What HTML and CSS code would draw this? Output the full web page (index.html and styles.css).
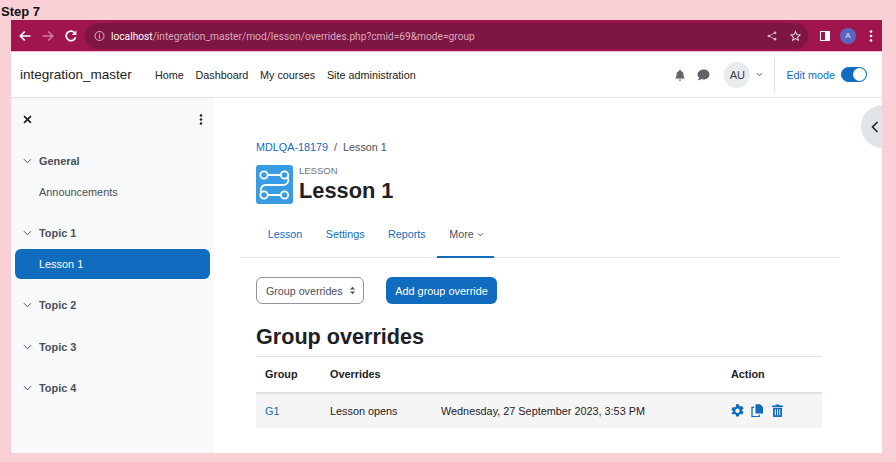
FILE: index.html
```html
<!DOCTYPE html>
<html lang="en">
<head>
<meta charset="utf-8">
<title>Group overrides</title>
<link rel="stylesheet" href="styles.css">
</head>
<body>
<div class="step">Step 7</div>
<div class="window">
  <div class="chrome">
    <div class="chrome-nav">
      <svg class="cicon" viewBox="0 0 14 14"><path d="M12.500 7H2.500M6.800 2.500 2.300 7l4.500 4.500" fill="none" stroke="#fff" stroke-width="1.700"/></svg>
      <svg class="cicon" viewBox="0 0 14 14"><path d="M1.500 7h10M7.200 2.500 11.700 7l-4.500 4.500" fill="none" stroke="#cf7d9c" stroke-width="1.700"/></svg>
      <svg class="cicon" viewBox="0 0 14 14"><path d="M11.600 8.200A4.800 4.800 0 1 1 10.400 3.500" fill="none" stroke="#fff" stroke-width="1.700"/><path d="M12.400 1.400v4.600H7.800z" fill="#fff"/></svg>
    </div>
    <div class="omnibox">
      <svg class="info" viewBox="0 0 12 12"><circle cx="6" cy="6" r="4.900" fill="none" stroke="#e4c6d2" stroke-width="1"/><path d="M6 5.200v3.400M6 3.200v1.100" stroke="#e4c6d2" stroke-width="1.100"/></svg>
      <span class="url"><b>localhost</b>/integration_master/mod/lesson/overrides.php?cmid=69&amp;mode=group</span>
      <svg class="oicon" viewBox="0 0 12 12"><circle cx="9.600" cy="2.200" r="1.600" fill="#d8b5c4"/><circle cx="9.600" cy="9.800" r="1.600" fill="#d8b5c4"/><circle cx="2.200" cy="6" r="1.600" fill="#d8b5c4"/><path d="M9.600 2.200 2.200 6l7.400 3.800" fill="none" stroke="#d8b5c4"/></svg>
      <svg class="oicon star" viewBox="0 0 12 12"><path d="M6 1.200 7.400 4.500l3.600.3-2.700 2.400.8 3.500L6 8.800l-3.100 1.900.8-3.500L1 4.800l3.600-.3z" fill="none" stroke="#ecd5df" stroke-width="1.100"/></svg>
    </div>
    <div class="chrome-end">
      <span class="panel"></span>
      <span class="profile">A</span>
      <svg class="dots" viewBox="0 0 4 14"><circle cx="2" cy="2.500" r="1.300" fill="#fff"/><circle cx="2" cy="7" r="1.300" fill="#fff"/><circle cx="2" cy="11.500" r="1.300" fill="#fff"/></svg>
    </div>
  </div>
  <header class="navbar">
    <span class="brand">integration_master</span>
    <nav class="primary">
      <a>Home</a><a>Dashboard</a><a>My courses</a><a>Site administration</a>
    </nav>
    <div class="usernav">
      <svg class="uicon" viewBox="0 0 14 14"><path d="M7 .8c.6 0 1 .4 1 1v.5c2 .5 3 2 3 4 0 2.200.6 3.200 1.500 4.200v.7H1.500v-.7C2.400 9.500 3 8.500 3 6.300c0-2 1-3.500 3-4v-.5c0-.6.4-1 1-1zM5.500 12.300h3A1.500 1.500 0 0 1 5.500 12.300z" fill="#5f6368"/></svg>
      <svg class="uicon msg" viewBox="1 1 12.500 11.500"><path d="M7.500 1.500c3 0 5.500 2 5.500 4.800s-2.500 4.800-5.500 4.800c-.8 0-1.500-.1-2.200-.4-.9.7-2.200 1.200-3.800 1.100.9-.7 1.500-1.600 1.600-2.600C1.900 8.900 1.500 7.700 1.500 6.300 1.500 3.500 4.500 1.500 7.500 1.500z" fill="#5f6368"/></svg>
      <span class="avatar">AU</span>
      <svg class="caret" viewBox="0 0 8 5"><path d="M1 1l3 3 3-3" fill="none" stroke="#495057" stroke-width="1.100"/></svg>
      <span class="divider"></span>
      <span class="editlabel">Edit mode</span>
      <span class="toggle"><span class="knob"></span></span>
    </div>
  </header>
  <div class="page">
    <aside class="sidebar">
      <div class="side-top">
        <svg class="close" viewBox="0 0 10 10"><path d="M1.200 1.200l7.600 7.600M8.800 1.200 1.200 8.800" stroke="#1d2125" stroke-width="1.900"/></svg>
        <svg class="kebab" viewBox="0 0 4 12"><circle cx="2" cy="1.700" r="1.400" fill="#1d2125"/><circle cx="2" cy="6" r="1.400" fill="#1d2125"/><circle cx="2" cy="10.300" r="1.400" fill="#1d2125"/></svg>
      </div>
      <section class="sec first">
        <div class="sec-head"><svg class="chev" viewBox="0 0 10 6"><path d="M1 1l4 4 4-4" fill="none" stroke="#495057" stroke-width="1.100"/></svg>General</div>
        <div class="item">Announcements</div>
      </section>
      <section class="sec">
        <div class="sec-head"><svg class="chev" viewBox="0 0 10 6"><path d="M1 1l4 4 4-4" fill="none" stroke="#495057" stroke-width="1.100"/></svg>Topic 1</div>
        <div class="item active">Lesson 1</div>
      </section>
      <section class="sec tall">
        <div class="sec-head"><svg class="chev" viewBox="0 0 10 6"><path d="M1 1l4 4 4-4" fill="none" stroke="#495057" stroke-width="1.100"/></svg>Topic 2</div>
      </section>
      <section class="sec tall short">
        <div class="sec-head"><svg class="chev" viewBox="0 0 10 6"><path d="M1 1l4 4 4-4" fill="none" stroke="#495057" stroke-width="1.100"/></svg>Topic 3</div>
      </section>
      <section class="sec tall">
        <div class="sec-head"><svg class="chev" viewBox="0 0 10 6"><path d="M1 1l4 4 4-4" fill="none" stroke="#495057" stroke-width="1.100"/></svg>Topic 4</div>
      </section>
    </aside>
    <main class="main">
      <button class="drawer-toggle"><svg viewBox="0 0 8 12"><path d="M6.500 1 1.500 6l5 5" fill="none" stroke="#1d2125" stroke-width="1.600"/></svg></button>
      <div class="crumbs"><a>MDLQA-18179</a><span class="sep">/</span><span>Lesson 1</span></div>
      <div class="heading">
        <span class="modicon"><svg viewBox="0 0 37 39"><g fill="none" stroke="#fff" stroke-width="1.800"><circle cx="8" cy="10" r="3.700"/><circle cx="28.500" cy="10" r="3.700"/><circle cx="8" cy="30" r="3.700"/><circle cx="28.500" cy="30" r="3.700"/><path d="M11.700 10h13.100M11.700 30h13.100M31.700 12c1.800 4.500-.5 8-4.500 8H10c-4 0-6 3-4.900 7.500"/></g></svg></span>
        <div class="titles">
          <div class="modname">LESSON</div>
          <h1>Lesson 1</h1>
        </div>
      </div>
      <div class="tabs">
        <a class="tab">Lesson</a><a class="tab">Settings</a><a class="tab">Reports</a>
        <a class="tab current">More<svg class="tabcaret" viewBox="0 0 8 5"><path d="M1 1l3 3 3-3" fill="none" stroke="#495057" stroke-width="1"/></svg></a>
      </div>
      <div class="actions">
        <div class="select">Group overrides<svg class="updown" viewBox="0 0 7 10"><path d="M3.500.8 6.300 4H.7zM3.500 9.200.7 6h5.600z" fill="#495057"/></svg></div>
        <button class="primary-btn">Add group override</button>
      </div>
      <h2>Group overrides</h2>
      <table class="overrides">
        <thead>
          <tr><th class="c1">Group</th><th class="c2">Overrides</th><th class="c3"></th><th class="c4">Action</th></tr>
        </thead>
        <tbody>
          <tr>
            <td><a>G1</a></td><td>Lesson opens</td><td>Wednesday, 27 September 2023, 3:53 PM</td>
            <td class="icons">
              <svg viewBox="0.500 0.500 13 13"><path fill-rule="evenodd" d="M5.600.7h2.800l.4 1.800 1.100.6 1.800-.6 1.400 2.400-1.400 1.300v1.200l1.400 1.300-1.400 2.400-1.800-.6-1.100.6-.4 1.800H5.600l-.4-1.800-1.100-.6-1.800.6L.9 9.700l1.400-1.300V7.200L.9 5.900l1.400-2.400 1.800.6 1.100-.6zM7 5a2.200 2.200 0 1 0 0 4.400A2.200 2.200 0 0 0 7 5z" fill="#0f6cbf"/></svg>
              <svg viewBox="0.500 0.500 13 13"><path d="M5 .8h4.500L12.500 3.500v6.500H5z" fill="#0f6cbf"/><path d="M3.700 3.800H1.500v9.400h7.200v-2" fill="none" stroke="#0f6cbf" stroke-width="1.300"/></svg>
              <svg viewBox="0.500 0.500 13 13"><path fill-rule="evenodd" d="M1.500 2h3.300l.5-1h3.400l.5 1h3.300v1.500h-11zM2.500 4.300h9v8.200c0 .6-.4 1-1 1h-7c-.6 0-1-.4-1-1zM4.300 5.800v6h1v-6zM6.500 5.800v6h1v-6zM8.700 5.800v6h1v-6z" fill="#0f6cbf"/></svg>
            </td>
          </tr>
        </tbody>
      </table>
    </main>
  </div>
</div>
</body>
</html>
```

FILE: styles.css
```css
* { box-sizing: border-box; }
html, body { margin: 0; padding: 0; height: 100%; overflow: hidden; }
body { background: #f8d0d6; font-family: "Liberation Sans", Arial, sans-serif; color: #1d2125; width: 896px; height: 462px; }
a { color: #0f6cbf; text-decoration: none; }
svg { display: block; flex: none; }

.step { height: 20px; padding: 4px 0 0 1px; font-size: 13px; line-height: 15px; font-weight: 700; color: #111; }
.window { margin-left: 11px; width: 871px; height: 433px; background: #fff; display: flex; flex-direction: column; overflow: hidden; }

.chrome { height: 32px; flex: none; background: #a1154f; display: flex; align-items: center; border-bottom: 1px solid #f4b8c9; padding-top: 1px; }
.chrome-nav { display: flex; gap: 9px; padding-left: 7px; width: 75px; flex: none; }
.cicon { width: 14px; height: 14px; }
.omnibox { width: 723px; height: 26px; margin-left: -1px; background: #7d1642; border-radius: 13px; display: flex; align-items: center; padding: 0 7px 0 9px; flex: none; }
.info { width: 11px; height: 12px; }
.url { margin-left: 6px; font-family: Roboto, sans-serif; font-size: 10.200px; color: #d9a9bd; white-space: nowrap; flex: 1; }
.url b { font-weight: 400; color: #fff; }
.oicon { width: 10px; height: 12px; }
.star { width: 11px; margin-left: 13px; }
.chrome-end { display: flex; align-items: center; flex: 1; padding-left: 12px; }
.panel { width: 10px; height: 10px; border: 1.500px solid #fff; border-right-width: 5px; background: #a1154f; }
.profile { width: 16px; height: 16px; border-radius: 50%; background: #5a66c4; color: #e6e8f8; font-size: 8px; line-height: 16px; text-align: center; margin-left: 10px; }
.dots { width: 4px; height: 14px; margin-left: 13px; }

.navbar { height: 46px; flex: none; background: #fff; border-bottom: 1px solid #dee2e6; display: flex; align-items: center; padding-left: 9px; }
.brand { font-size: 13.500px; color: #1d2125; width: 135px; flex: none; }
.primary { display: flex; gap: 11.700px; font-size: 10.800px; }
.primary a { color: #1d2125; }
.usernav { margin-left: auto; display: flex; align-items: center; height: 100%; padding-right: 15px; }
.uicon { width: 12px; height: 12px; margin-right: 11px; }
.msg { margin-right: 14px; width: 13px; }
.avatar { width: 26px; height: 26px; border-radius: 50%; background: #e9ecef; font-size: 11px; line-height: 26px; text-align: center; color: #343a40; }
.caret { width: 7px; height: 5px; margin-left: 6px; }
.divider { width: 1px; height: 34px; background: #dee2e6; margin: 0 11px 0 11px; }
.editlabel { font-size: 10.800px; color: #0f6cbf; }
.toggle { width: 26px; height: 15px; border-radius: 8px; background: #0f6cbf; margin-left: 6px; position: relative; border: 1px solid #0f6cbf; }
.knob { position: absolute; right: 0; top: 0; width: 13px; height: 13px; border-radius: 50%; background: #fff; }

.page { flex: 1; display: flex; min-height: 0; }
.sidebar { width: 203px; flex: none; background: #f8f9fa; font-size: 10.900px; color: #495057; padding: 0 4px; }
.side-top { display: flex; justify-content: space-between; align-items: center; height: 42px; padding: 0 7px 0 8px; }
.close { width: 9px; height: 9px; }
.kebab { width: 4px; height: 11px; }
.sec { padding-top: 11px; }
.sec.first { padding-top: 13px; }
.sec-head { display: flex; align-items: center; height: 15px; font-weight: 700; color: #495057; padding-left: 8px; gap: 7px; margin-bottom: 9px; }
.sec.tall { height: 42px; }
.sec.short { height: 41px; }
.chev { width: 9px; height: 6px; }
.item { height: 30px; line-height: 30px; padding-left: 24px; border-radius: 6px; }
.sec .item { margin-bottom: 7px; }
.item.active { background: #0f6cbf; color: #fff; }

.main { flex: 1; position: relative; padding: 40px 43px 0 42px; min-width: 0; }
.drawer-toggle { position: absolute; right: -22px; top: 7px; width: 43px; height: 43px; border: 0; border-radius: 50%; background: #e2e5e8; padding: 0 0 0 10px; display: flex; align-items: center; }
.drawer-toggle svg { width: 8px; height: 12px; }
.crumbs { font-size: 10.800px; color: #495057; display: flex; gap: 6px; height: 18px; line-height: 18px; }
.heading { display: flex; align-items: flex-start; gap: 6px; margin-top: 9px; height: 39px; }
.modicon { width: 37px; height: 39px; background: #399be2; border-radius: 3px; flex: none; }
.modicon svg { width: 37px; height: 39px; }
.modname { font-size: 9.500px; line-height: 12px; color: #6a737b; }
h1 { margin: 1px 0 0; font-size: 21.800px; line-height: 26px; font-weight: 700; color: #1d2125; }
.tabs { display: flex; margin: 13px 0 0 -16px; padding-left: 16px; width: 599px; height: 41px; border-bottom: 1px solid #dee2e6; font-size: 10.700px; }
.tab { line-height: 35px; padding: 0 11.800px; height: 41px; border-bottom: 2px solid transparent; }
.tab.current { color: #495057; border-bottom-color: #0f6cbf; display: flex; align-items: center; gap: 3px; width: 57px; flex: none; padding: 0 12px 4px; }
.tabcaret { width: 7px; height: 5px; }
.actions { display: flex; gap: 22px; margin-top: 19px; }
.select { width: 108px; height: 27px; border: 1px solid #8f959e; border-radius: 6px; font-size: 10.700px; color: #495057; display: flex; align-items: center; justify-content: space-between; padding: 0 7px 0 9px; }
.updown { width: 7px; height: 9px; }
.primary-btn { width: 111px; height: 27px; border: 0; padding: 0; border-radius: 6px; background: #0f6cbf; color: #fff; font: 10.900px "Liberation Sans", Arial, sans-serif; }
h2 { margin: 20px 0 0; font-size: 21.600px; line-height: 26px; font-weight: 700; color: #1d2125; }
.overrides { margin-top: 6px; width: 566px; border-collapse: collapse; font-size: 10.850px; table-layout: fixed; border-top: 1px solid #dee2e6; }
.overrides th { text-align: left; height: 36px; padding: 0 9px; border-bottom: 2px solid #dee2e6; font-weight: 700; color: #1d2125; }
.overrides td { height: 35px; padding: 0 9px; background: #f5f5f6; color: #1d2125; }
.c1 { width: 65px; } .c2 { width: 111px; } .c3 { width: 290px; }
.icons svg { display: inline-block; width: 13px; height: 13px; margin-right: 4px; vertical-align: middle; }
```
